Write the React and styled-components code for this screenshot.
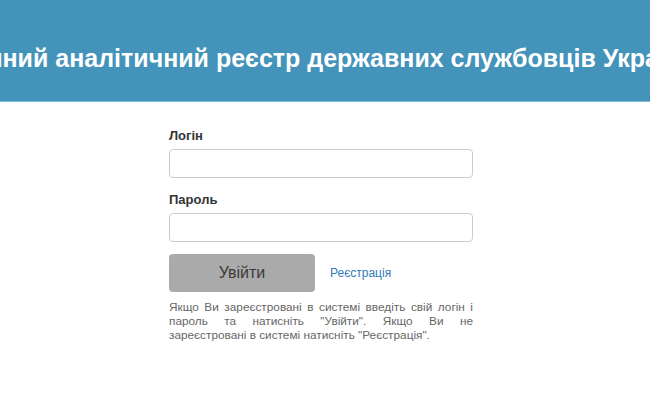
import React from "react";
import styled, { createGlobalStyle } from "styled-components";

const GlobalStyle = createGlobalStyle`
  html, body {
    margin: 0;
    padding: 0;
    background: #fff;
    font-family: "Liberation Sans", Arial, sans-serif;
    overflow: hidden;
  }
`;

const Header = styled.header`
  height: 102px;
  box-sizing: border-box;
  padding-top: 16px;
  background-color: #4393ba;
  border-bottom: 1px solid #7db5d2;
  display: flex;
  align-items: center;
  justify-content: center;
  overflow: hidden;
`;

const Title = styled.h1`
  margin: 0;
  flex-shrink: 0;
  white-space: nowrap;
  color: #fff;
  font-size: 25px;
  font-weight: bold;
`;

const Form = styled.form`
  width: 304px;
  padding-right: 8px;
  margin: 26px auto 0;
`;

const Label = styled.label`
  display: block;
  font-size: 13px;
  font-weight: bold;
  color: #333;
  margin-bottom: 6px;
`;

const Input = styled.input`
  display: block;
  box-sizing: border-box;
  width: 100%;
  height: 29px;
  border: 1px solid #ccc;
  border-radius: 4px;
  margin: 0 0 ${(p) => p.$gap}px;
`;

const Actions = styled.div`
  display: flex;
  align-items: center;
  gap: 15px;
`;

const Button = styled.button`
  width: 146px;
  height: 38px;
  border: none;
  border-radius: 4px;
  background: #aaa;
  color: #3a3a3a;
  font-family: inherit;
  font-size: 16px;
  font-weight: normal;
`;

const Link = styled.a`
  color: #337ab7;
  font-size: 12px;
  text-decoration: none;
`;

const Hint = styled.p`
  margin: 8px 0 0;
  font-size: 11.8px;
  line-height: 14px;
  color: #666;
  text-align: justify;
`;

export default function App() {
  return (
    <>
      <GlobalStyle />
      <Header>
        <Title>Єдиний аналітичний реєстр державних службовців України</Title>
      </Header>
      <Form onSubmit={(e) => e.preventDefault()}>
        <Label>Логін</Label>
        <Input type="text" $gap={14} />
        <Label>Пароль</Label>
        <Input type="password" $gap={12} />
        <Actions>
          <Button type="submit">Увійти</Button>
          <Link href="#">Реєстрація</Link>
        </Actions>
        <Hint>
          Якщо Ви зареєстровані в системі введіть свій логін і пароль та
          натисніть "Увійти". Якщо Ви не зареєстровані в системі натисніть
          "Реєстрація".
        </Hint>
      </Form>
    </>
  );
}
